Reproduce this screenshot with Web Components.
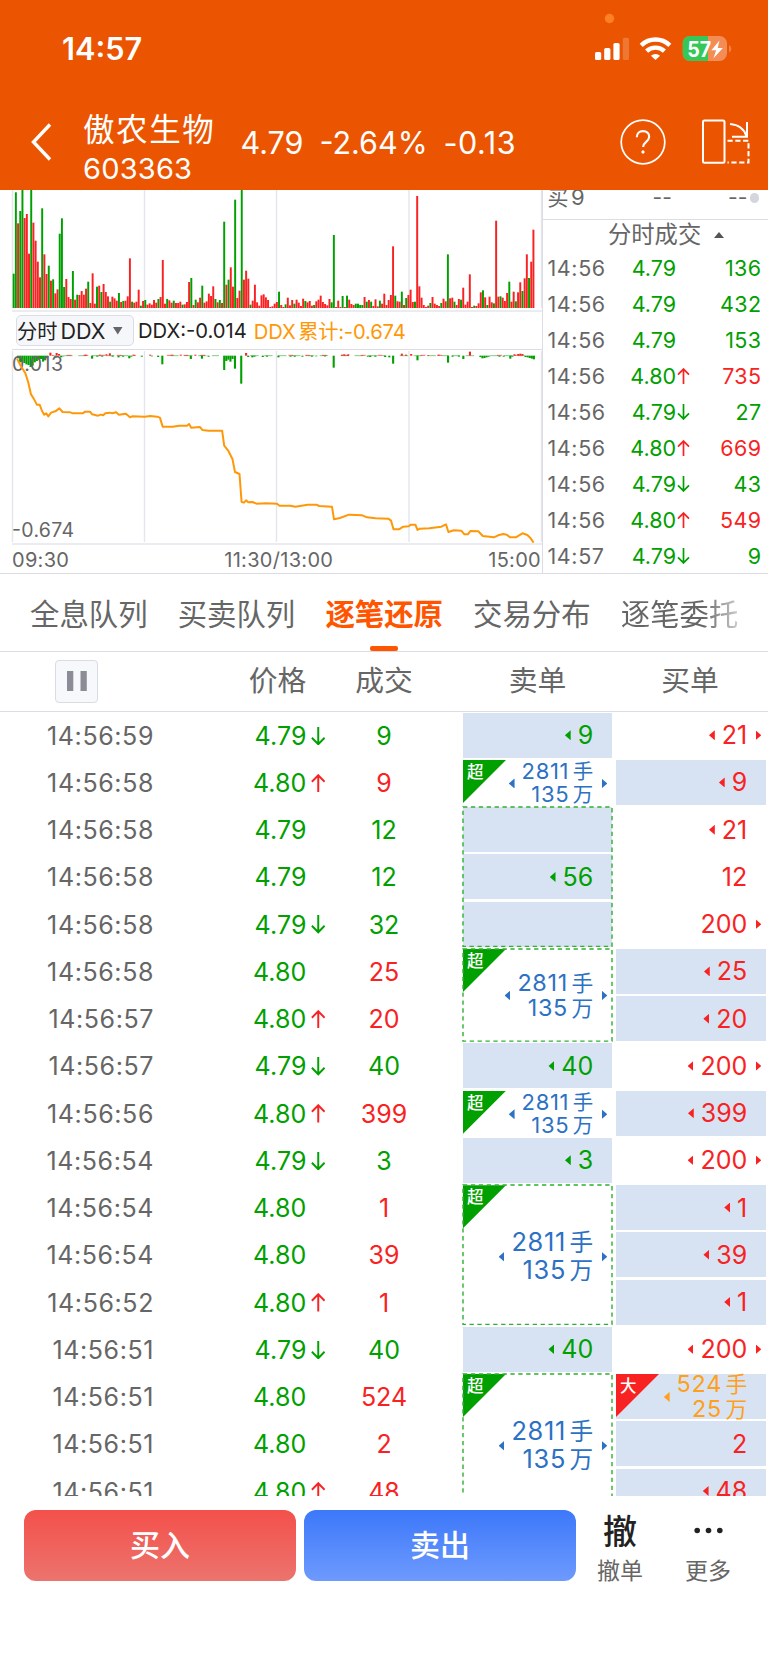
<!DOCTYPE html>
<html lang="zh-CN">
<head>
<meta charset="utf-8">
<title>傲农生物 603363</title>
<style>
body{
    margin: 0;
    background: #fff;
    font-family: Inter, "Noto Sans CJK SC", sans-serif;
    --red: #f92222;
    --green: #00a000;
    --grey: #666;
    --line: #dcdce4;
    color: var(--grey);
    text-autospace: no-autospace;
}
</style>
</head>
<body>
<stock-app></stock-app>

<script>
class BaseElement extends HTMLElement{
    constructor(){
        super();
        this.attachShadow({mode:'open'});
    }

    connectedCallback(){
        this.render()
    }

    render(){
        this.shadowRoot.innerHTML = this.getTemplate() + this.getStyle()
    }
}

class StatusBar extends BaseElement{
    getTemplate(){
        return `
        <time>14:57</time>
        <svg width="140" height="60" viewBox="592 10 140 60" fill="#fff">
            <circle cx="609.5" cy="18.5" r="4.7" fill="#fd8024"/>
            <rect x="595" y="52" width="6.2" height="8" rx="1.6"/>
            <rect x="604.2" y="48" width="6.2" height="12" rx="1.6"/>
            <rect x="613.4" y="43" width="6.2" height="17" rx="1.6"/>
            <rect x="622.8" y="37.7" width="6.2" height="22.3" rx="1.6" opacity=".2"/>
            <g fill="none" stroke="#fff" stroke-width="4.4">
                <path d="M641.2 45.3a20.5 20.5 0 0 1 28.6 0"/>
                <path d="M646.6 51.2a12.8 12.8 0 0 1 17.8 0"/>
            </g>
            <path d="M655.5 60l-4.6-4.3a6.8 6.8 0 0 1 9.2 0z"/>
            <clipPath id="b"><rect x="682.5" y="36" width="44.5" height="25" rx="7.5"/></clipPath>
            <g clip-path="url(#b)">
                <rect x="682.5" y="36" width="45" height="25" fill="#f48c55"/>
                <rect x="682.5" y="36" width="25.5" height="25" fill="#34c759"/>
            </g>
            <path d="M729 45v7.6a4.3 4.3 0 0 0 0-7.6z" fill="#f2834a"/>
            <text x="687.3" y="56.5" font-size="21" font-weight="700" textLength="24" lengthAdjust="spacingAndGlyphs">57</text>
            <path d="M719.5 40.5l-8.2 9.8h4.8l-2.6 8 9.4-10.2h-5.2z"/>
        </svg>
        `
    }

    getStyle(){
        return `
        <style>
        :host{
            display: flex;
            justify-content: space-between;
            align-items: flex-start;
            height: 95px;
            padding: 0 36px 0 62px;
            color: #fff;
        }

        time{
            font-size: 30.7px;
            font-weight: 600;
            line-height: 98px;
        }

        svg{
            margin-top: 10px;
        }
        </style>
        `
    }
}

class StockHeader extends BaseElement{
    getTemplate(){
        return `
        <svg class="back" width="22" height="40" viewBox="0 0 22 40"><path d="M20 2.5 3.5 20 20 37.5"/></svg>
        <div class="name">
            <b>傲农生物</b>
            <span>603363</span>
        </div>
        <div class="quote"><span>4.79</span><span>-2.64%</span><span>-0.13</span></div>
        <svg class="help" width="46" height="46" viewBox="0 0 46 46">
            <circle cx="23" cy="23" r="21.8"/>
            <path d="M16.8 18.2c0-4 2.6-6.1 6.2-6.1s6.2 2.2 6.2 5.7c0 5-6.1 5.2-6.1 10.2" stroke-width="2.1"/>
            <circle cx="23" cy="33" r="1.2" fill="#fff" stroke-width="1"/>
        </svg>
        <svg width="50" height="46" viewBox="0 0 50 46">
            <rect x="2" y="1.5" width="21.5" height="42.3" rx="1.5" stroke-width="2"/>
            <path d="M26.5 21.8h21V43.5h-21" stroke-dasharray="5.2 2.6" stroke-width="2"/>
            <path d="M29 5c8 .6 14.5 5 16.5 12.5M46 3v14.8H31" stroke-width="2"/>
        </svg>
        `
    }

    getStyle(){
        return `
        <style>
        :host{
            display: flex;
            align-items: center;
            height: 95px;
            padding: 0 17px 0 30px;
            box-sizing: border-box;
            color: #fff;
        }

        svg{
            fill: none;
            stroke: #fff;
            stroke-width: 1.7;
            flex: none;
            margin-bottom: 2px;
        }

        .back{
            stroke-width: 3.4;
        }

        .name{
            width: 158px;
            margin-left: 31px;
            padding-top: 12px;
        }

        .name b{
            display: block;
            font-size: 31.5px;
            font-weight: 400;
            letter-spacing: 1.6px;
            line-height: 40px;
            white-space: nowrap;
        }

        .name span{
            display: block;
            font-size: 29px;
            letter-spacing: .2px;
            line-height: 37px;
        }

        .quote{
            display: flex;
            gap: 16px;
            font-size: 30.5px;
            white-space: nowrap;
            flex: 1;
            margin: 0 0 1px -.5px;
        }

        .quote span:last-child{
            letter-spacing: .5px;
        }

        .help{
            margin-right: 35px;
        }
        </style>
        `
    }
}

// one value per minute, negative = sell bar (green)
const VOLUME = [
    -103,-347,254,-291,-354,270,282,163,-354,256,202,139,92,-299,161,102,-127,82,-86,44,
    56,-223,-269,-63,87,33,27,-111,25,-40,39,51,40,58,-79,15,104,13,-64,67,
    -48,72,48,35,-19,34,29,22,-45,18,-21,22,35,149,-19,16,19,55,-7,21,
    -24,10,14,10,24,16,-27,33,144,13,-27,23,16,-22,15,15,19,-10,11,18,
    78,-90,9,-25,17,31,-67,16,20,43,36,65,-27,17,-24,15,-259,70,-85,122,
    64,-325,30,52,-354,85,112,88,-10,22,70,17,7,38,41,32,24,3,5,13,
    18,-49,9,3,-11,31,8,24,-13,25,16,6,28,-21,17,21,7,-9,20,25,
    37,18,12,8,27,-17,-219,3,22,3,-36,3,-37,25,12,9,-13,-13,-9,-9,
    33,-19,24,-19,6,26,5,-22,13,43,9,24,39,185,-37,20,19,-49,9,-30,
    39,55,18,-19,336,65,31,9,3,7,-15,33,13,9,6,-15,28,20,-161,29,
    31,-19,9,27,-25,61,10,19,101,3,-7,6,14,47,-53,32,-9,34,17,-14,
    262,34,-35,31,21,45,-79,19,49,-20,47,77,-51,89,161,-90,139,235
]

class VolumeChart extends BaseElement{
    getTemplate(){
        const bars = VOLUME.map((v, i) => {
            const h = Math.abs(v) / 3
            const x = 12.7 + i * 2.193
            return `<rect x="${x.toFixed(2)}" y="${(118 - h).toFixed(2)}" width="1.95" height="${h.toFixed(2)}" fill="var(${v < 0 ? '--green' : '--red'})"/>`
        }).join('')
        return `
        <svg width="542" height="122" viewBox="0 0 542 122">
            <path d="M12.5 0V118M144.5 0V118M276.5 0V118M409 0V118M541.5 0V118M12 121H542" stroke="#e4e6ee" stroke-width="1.4"/>
            ${bars}
        </svg>
        `
    }

    getStyle(){
        return `
        <style>
        :host, svg{
            display: block;
        }
        </style>
        `
    }
}

class DdxChart extends BaseElement{
    getTemplate(){
        // [x, height], positive goes down
        const bars = [
            [52,8],[58,20],[64,18],[70,22],[76,26],[82,28],[88,34],[94,30],[100,20],[106,16],[112,12],[118,10],[124,18],[130,14],
            [136,6],[145,-9],[152,-2],[158,3],[163,-8],[170,-5],[176,5],[182,2],[246,-3],[265,9],[280,3],[287,-3],[294,3],[306,-4],[316,-7],[324,3],[341,5],[354,3],[372,8],[378,3],
            [384,-3],[408,3],[432,-3],[437,2],[455,4],[467,26],[496,-3],[520,-3],[549,10],[562,-3],[581,9],[600,3],
            [645,43],[651,16],[657,12],[663,18],[669,10],[676,39],[694,84],[708,-8],[714,4],[726,5],[732,3],[756,4],[768,3],
            [801,5],[836,3],[848,3],[870,3],[897,3],[910,2],[935,2],[960,36],[984,-3],[990,-4],[1002,-4],
            [1058,3],[1065,4],[1080,3],[1108,4],[1120,5],[1131,24],[1156,-6],[1168,-3],[1183,-5],[1201,14],
            [1232,-2],[1262,-3],[1289,21],[1302,3],[1320,3],[1333,10],[1352,-12],[1382,4],[1388,8],[1394,7],[1400,5],[1406,3],
            [1437,3],[1449,3],[1468,9],[1474,3],[1480,-4],[1491,-5],[1497,-6],[1503,-5],[1512,4],[1518,5],[1524,7],[1530,9],[1536,11]
        ].map(([x, h]) => `<rect x="${x - 3}" y="${h > 0 ? 17 : 17 + h}" width="6" height="${Math.abs(h)}" fill="var(${h > 0 ? '--green' : '--red'})"/>`).join('')
        return `
        <svg width="542" height="195" viewBox="0 0 542 195">
            <path d="M12.5 1V192M144.5 1V192M276.5 1V192M409 1V192M541.5 1V192M12 194H542" stroke="#e4e6ee" stroke-width="1.4"/>
            <g transform="scale(.3476 .3333)">
                <path d="M185 17H390M490 17H630M720 17H950M980 17H1110M1150 17H1290M1300 17H1380M1410 17H1510" stroke="#4bb54b" stroke-width="2" stroke-dasharray="24 16"/>
                <path d="M192 16H390M480 16H620M830 16H950M990 16H1110M1210 16H1290M1430 16H1510" stroke="var(--red)" stroke-width="2" stroke-dasharray="14 34"/>
                ${bars}
            </g>
            <g font-size="19.5" fill="var(--grey)">
                <text x="12" y="20.5" textLength="51">0.013</text>
                <text x="12" y="186.500" textLength="62">-0.674</text>
            </g>
            <g transform="scale(.3476 .3333)">
                <path class="sum" d="M49 26L60 48 73 70 81 96 89 133 97 146 106 164 114 164 121 183 127 194 133 190 139 199 147 188 159 184 171 175 180 186 202 187 210 190 238 190 245 185 259 185 265 193 282 197 290 194 297 196 303 190 316 188 323 190 334 187 342 194 362 191 374 202 380 199 416 200 432 198 452 200 460 203 468 230 497 230 516 227 538 227 544 222 550 233 575 231 582 240 600 242 639 242 645 287 657 303 669 328 676 366 689 372 695 456 702 458 708 451 714 457 726 456 738 461 765 460 797 461 804 467 835 467 850 470 885 464 910 464 918 468 955 470 961 508 978 504 1004 494 1042 496 1056 502 1080 505 1117 506 1125 512 1132 538 1148 538 1160 530 1176 529 1182 524 1195 524 1201 540 1208 536 1235 535 1270 530 1283 523 1290 546 1306 541 1327 542 1336 553 1346 553 1353 543 1376 544 1389 558 1421 562 1433 556 1448 552 1458 554 1467 562 1484 562 1503 550 1517 555 1526 564 1535 578"/>
            </g>
        </svg>
        <div class="axis"><span>09:30</span><span>11:30/13:00</span><span>15:00</span></div>
        `
    }

    getStyle(){
        return `
        <style>
        :host, svg{
            display: block;
        }

        .sum{
            fill: none;
            stroke: #ff9808;
            stroke-width: 2;
            stroke-linejoin: round;
            vector-effect: non-scaling-stroke;
        }

        .axis{
            display: flex;
            justify-content: space-between;
            padding: 0 1px 0 12px;
            font-size: 20px;
            letter-spacing: .3px;
            line-height: 30px;
        }
        </style>
        `
    }
}

class ChartPanel extends BaseElement{
    getTemplate(){
        return `
        <volume-chart></volume-chart>
        <div class="legend">
            <span class="select">分时<i>DDX</i><svg width="10" height="8"><path d="M0 0h9.5L4.75 7.5z" fill="#666"/></svg></span>
            <span>DDX:-0.014</span>
            <span class="total">DDX<i>累计</i>:-0.674</span>
        </div>
        <ddx-chart></ddx-chart>
        `
    }

    getStyle(){
        return `
        <style>
        :host{
            display: block;
            width: 542px;
            overflow: hidden;
        }

        .legend{
            display: flex;
            align-items: center;
            height: 37px;
            margin-left: 12px;
            padding-left: 4px;
            border-bottom: 1.5px solid var(--line);
            font-size: 20.2px;
            color: #222;
            white-space: nowrap;
        }

        .select{
            display: flex;
            align-items: center;
            box-sizing: border-box;
            width: 118px;
            height: 31px;
            border: 1px solid #dcdee6;
            border-radius: 5px;
            background: #f6f7fa;
            margin-right: 4px;
        }

        .legend i{
            font-style: normal;
        }

        .select i{
            font-size: 21.5px;
            margin-left: 3px;
        }

        .select svg{
            margin-left: 8px;
        }

        .total{
            color: #ff9808;
            margin-left: 7px;
            letter-spacing: -.15px;
        }

        .total i{
            margin-left: 2.5px;
        }
        </style>
        `
    }
}

class PriceArrow extends BaseElement{
    getTemplate(){
        const up = this.getAttribute('dir') === 'up'
        return `
        <svg viewBox="0 0 14 18" style="color: var(${up ? '--red' : '--green'})">
            <path d="${up ? 'M7 18V1M.8 7.5 7 1.2l6.2 6.3' : 'M7 0v17M.8 10.5 7 16.8l6.2-6.3'}" fill="none" stroke="currentColor" stroke-width="1.9"/>
        </svg>
        `
    }

    getStyle(){
        return `
        <style>
        :host{
            display: inline-block;
            width: 14px;
            height: 18px;
        }

        svg{
            display: block;
            width: 100%;
            height: 100%;
        }
        </style>
        `
    }
}

class TickList extends BaseElement{
    getTemplate(){
        const ticks = [
            ['14:56','4.79','','136','g'],
            ['14:56','4.79','','432','g'],
            ['14:56','4.79','','153','g'],
            ['14:56','4.80','up','735','r'],
            ['14:56','4.79','down','27','g'],
            ['14:56','4.80','up','669','r'],
            ['14:56','4.79','down','43','g'],
            ['14:56','4.80','up','549','r'],
            ['14:57','4.79','down','9','g']
        ]
        return `
        <div class="level"><span>买<i>9</i></span><span>--</span><span>--</span><em></em></div>
        <div class="title">分时成交<svg width="10" height="6"><path d="M0 6 5 0l5 6z" fill="#555"/></svg></div>
        ${ticks.map(([time, price, dir, qty, c]) => `
        <div class="row">
            <span class="time">${time}</span>
            <span class="g price">${price}</span>
            <span class="dir">${dir ? `<price-arrow dir="${dir}"></price-arrow>` : ''}</span>
            <span class="${c} qty">${qty}</span>
        </div>`).join('')}
        `
    }

    getStyle(){
        return `
        <style>
        :host{
            display: block;
            box-sizing: border-box;
            width: 226px;
            border-left: 1.5px solid var(--line);
            overflow: hidden;
        }

        .level{
            display: grid;
            grid-template-columns: 105px 75.5px 21.5px 10px;
            align-items: center;
            height: 30px;
            box-sizing: border-box;
            padding: 0 0 15px 4.5px;
            border-bottom: 1.5px solid var(--line);
            font-size: 21px;
            line-height: 14px;
        }

        .level i{
            font-style: normal;
            margin-left: 2.5px;
            font-size: 22px;
        }

        .level em{
            width: 9.5px;
            height: 9.5px;
            border-radius: 50%;
            background: #d4d6de;
        }

        .title{
            display: flex;
            align-items: center;
            gap: 13px;
            height: 30px;
            padding-left: 65px;
            font-size: 23.3px;
            line-height: 30px;
        }

        .row{
            display: grid;
            grid-template-columns: 60px 68.5px 16px 1fr;
            align-items: center;
            height: 36px;
            padding: 0 6.5px 0 4.5px;
            font-size: 21.5px;
        }

        .time{
            letter-spacing: .6px;
        }

        .price, .qty{
            text-align: right;
        }

        .qty{
            letter-spacing: .4px;
        }

        .dir{
            display: flex;
            padding-left: 1px;
        }

        .r{ color: var(--red); }
        .g{ color: var(--green); }
        price-arrow{ width: 13px; height: 16px; }
        </style>
        `
    }
}

class TradeTabs extends BaseElement{
    getTemplate(){
        return `
        <a>全息队列</a>
        <a>买卖队列</a>
        <a class="active">逐笔还原</a>
        <a>交易分布</a>
        <a class="fade">逐笔委托</a>
        `
    }

    getStyle(){
        return `
        <style>
        :host{
            display: flex;
            gap: 30.1px;
            height: 79px;
            box-sizing: border-box;
            padding-left: 30px;
            border-top: 1.5px solid var(--line);
            border-bottom: 1.5px solid var(--line);
            overflow: hidden;
        }

        a{
            display: flex;
            flex-direction: column;
            align-items: center;
            flex: none;
            width: 117.6px;
            font-size: 29.4px;
            line-height: 82px;
            height: 77px;
        }

        .active{
            color: #ff5500;
            font-weight: 700;
        }

        .active::after{
            content: '';
            width: 28px;
            height: 4.5px;
            border-radius: 2px;
            background: #ff5500;
            margin-top: -9.5px;
            flex: none;
        }

        .fade{
            background: linear-gradient(90deg, #666 70%, #ccc 100%);
            background-clip: text;
            color: transparent;
        }
        </style>
        `
    }
}

class OrderCell extends BaseElement{
    getTemplate(){
        const a = this.getAttribute('arrows') || ''
        const tag = this.getAttribute('tag')
        return `
        ${tag ? `<span class="tag"><b>${tag}</b></span>` : ''}
        ${this.hasAttribute('dashed') ? '<svg class="frame"><rect width="100%" height="100%"/></svg>' : ''}
        ${a.includes('l') ? '<i class="left"></i>' : ''}
        <span class="text"><slot></slot></span>
        <span class="end">${a.includes('r') ? '<i class="right"></i>' : ''}</span>
        `
    }

    getStyle(){
        return `
        <style>
        :host{
            position: relative;
            display: flex;
            align-items: center;
            justify-content: flex-end;
            font-size: 25px;
            margin-bottom: 2.3px;
        }

        :host([fill]){
            background: #d7e3f2;
        }

        :host([color=green]){ color: var(--green); }
        :host([color=red]){ color: var(--red); }
        :host([color=blue]){ color: #2c71c4; }
        :host([color=orange]){ color: #ff9f1a; }

        .frame{
            position: absolute;
            left: 0;
            top: 0;
            width: 100%;
            height: 100%;
            overflow: visible;
            fill: none;
            stroke: #30b030;
            stroke-width: 1.4;
            stroke-dasharray: 4.3 3.6;
        }

        .text{
            text-align: right;
        }

        .end{
            width: 18.8px;
            display: flex;
            justify-content: flex-end;
        }

        .left, .right{
            width: 5.8px;
            height: 10px;
            background: currentColor;
        }

        .left{
            clip-path: polygon(100% 0, 100% 100%, 0 50%);
            margin-right: 7px;
        }

        .right{
            clip-path: polygon(0 0, 100% 50%, 0 100%);
            margin-right: 4.7px;
        }

        .tag{
            position: absolute;
            left: 0;
            top: 0;
            width: 43px;
            height: 43px;
            background: var(--tag, var(--green));
            clip-path: polygon(0 0, 100% 0, 0 100%);
            color: #fff;
            font-size: 16.5px;
            line-height: 24px;
            padding-left: 4px;
            box-sizing: border-box;
        }

        .tag b{
            font-weight: 500;
        }
        </style>
        `
    }
}

class TradeTable extends BaseElement{
    getTemplate(){
        const rows = [
            ['14:56:59','4.79','down','9','g'],
            ['14:56:58','4.80','up','9','r'],
            ['14:56:58','4.79','','12','g'],
            ['14:56:58','4.79','','12','g'],
            ['14:56:58','4.79','down','32','g'],
            ['14:56:58','4.80','','25','r'],
            ['14:56:57','4.80','up','20','r'],
            ['14:56:57','4.79','down','40','g'],
            ['14:56:56','4.80','up','399','r'],
            ['14:56:54','4.79','down','3','g'],
            ['14:56:54','4.80','','1','r'],
            ['14:56:54','4.80','','39','r'],
            ['14:56:52','4.80','up','1','r'],
            ['14:56:51','4.79','down','40','g'],
            ['14:56:51','4.80','','524','r'],
            ['14:56:51','4.80','','2','r'],
            ['14:56:51','4.80','up','48','r']
        ]
        // [row, rows spanned, text, arrows]
        const sells = [
            [0,1,'9','l'],[1,1],[2,1,''],[3,1,'56','l'],[4,1,''],[5,2],[7,1,'40','l'],[8,1],[9,1,'3','l'],[10,3],[13,1,'40','l'],[14,3]
        ]
        const buys = [
            ['21','lr'],['9','l',1],['21','l'],['12',''],['200','r'],['25','l',1],['20','l',1],['200','lr'],['399','l',1],
            ['200','lr'],['1','l',1],['39','l',1],['1','l',1],['200','lr'],null,['2','',1],['48','l',1]
        ]
        return `
        <header>
            <span class="pause"><svg width="20" height="20"><path d="M0 0h6.3v20H0zM13.5 0h6.3v20h-6.3z" fill="#8c8c96"/></svg></span>
            <span>价格</span><span>成交</span><span>卖单</span><span>买单</span>
        </header>
        <section>
            ${rows.map(([time, price, dir, qty, c], i) => `
            <span class="time" style="grid-row:${i + 1}">${time}</span>
            <span class="price" style="grid-row:${i + 1}">${price}${dir ? `<price-arrow dir="${dir}"></price-arrow>` : '<s></s>'}</span>
            <span class="qty ${c}" style="grid-row:${i + 1}">${qty}</span>`).join('')}
            ${sells.map(([row, span, text, arrows]) => text === undefined
                ? `<order-cell class="sell big s${span}" color="blue" tag="超" arrows="lr" ${span > 1 ? 'dashed' : ''} style="grid-row:${row + 1}/span ${span}">2811<i>手</i><br>135<i>万</i></order-cell>`
                : `<order-cell class="sell" color="green" fill arrows="${arrows || ''}" style="grid-row:${row + 1}">${text}</order-cell>`).join('')}
            <order-cell class="sell" dashed style="grid-row:3/span 3"></order-cell>
            ${buys.map((b, i) => b
                ? `<order-cell class="buy" color="red" arrows="${b[1]}" ${b[2] ? 'fill' : ''} style="grid-row:${i + 1}">${b[0]}</order-cell>`
                : `<order-cell class="buy big s2" color="orange" fill tag="大" arrows="l" style="--tag:var(--red);grid-row:${i + 1}">524<i>手</i><br>25<i>万</i></order-cell>`).join('')}
        </section>
        `
    }

    getStyle(){
        return `
        <style>
        :host{
            display: block;
        }

        header{
            display: grid;
            grid-template-columns: 224px 107px 106px 201px 104px;
            align-items: center;
            height: 60px;
            box-sizing: border-box;
            border-bottom: 1.5px solid var(--line);
            font-size: 28.8px;
            line-height: 56px;
            text-align: center;
        }

        .pause{
            display: flex;
            align-items: center;
            justify-content: center;
            box-sizing: border-box;
            width: 43px;
            height: 43px;
            margin-left: 55px;
            border: 1.5px solid #d9dce2;
            border-radius: 4px;
            background: #f6f8fb;
        }

        section{
            display: grid;
            grid-template-columns: 154px 171px 118px 20px 149px 4px 150px 2px;
            grid-auto-rows: 47.24px;
            height: 784px;
            padding-top: .8px;
            box-sizing: border-box;
            overflow: hidden;
            font-size: 25px;
            line-height: 46px;
        }

        .time{
            grid-column: 1;
            text-align: right;
            letter-spacing: .6px;
        }

        .price{
            grid-column: 2;
            display: flex;
            align-items: center;
            justify-content: flex-end;
            height: 46px;
            color: var(--green);
            letter-spacing: .1px;
        }

        .price price-arrow, .price s{
            width: 14.5px;
            height: 18.5px;
            margin-left: 4px;
        }

        .qty{
            grid-column: 3;
            text-align: center;
        }

        .sell{ grid-column: 5; }
        .buy{ grid-column: 7; }
        .r{ color: var(--red); }
        .g{ color: var(--green); }

        .big{
            font-size: 22px;
            line-height: 22.2px;
            letter-spacing: .7px;
            padding-top: 2px;
        }

        .big i{
            font-style: normal;
            font-size: .93em;
            letter-spacing: 0;
            margin-left: 3.5px;
        }

        .s2{
            font-size: 23.4px;
            line-height: 23.7px;
            padding-top: 1px;
        }

        .s3{
            font-size: 25.4px;
            line-height: 26.5px;
            padding-top: 4px;
        }
        </style>
        `
    }
}

class TradeBar extends BaseElement{
    getTemplate(){
        return `
        <button class="buy">买入</button>
        <button class="sell">卖出</button>
        <div><b>撤</b><span>撤单</span></div>
        <div>
            <svg width="29" height="43" viewBox="0 0 29 43" fill="#222"><circle cx="3.2" cy="20.5" r="2.8"/><circle cx="14.5" cy="20.5" r="2.8"/><circle cx="25.8" cy="20.5" r="2.8"/></svg>
            <span>更多</span>
        </div>
        `
    }

    getStyle(){
        return `
        <style>
        :host{
            display: grid;
            grid-template-columns: 272px 272px 80px 80px;
            grid-template-rows: 71px;
            column-gap: 8px;
            padding: 14px 0 82px 24px;
        }

        button{
            border: 0;
            border-radius: 12px;
            color: #fff;
            font: 500 30px/71px Inter, "Noto Sans CJK SC", sans-serif;
            padding: 0;
        }

        .buy{ background: linear-gradient(#f4504b, #ec746e); }
        .sell{ background: linear-gradient(#3c78f9, #6e9afe); }

        div{
            display: flex;
            flex-direction: column;
            align-items: center;
            width: 72px;
        }

        svg{
            flex: none;
        }

        div b{
            color: #222;
            font-size: 34px;
            font-weight: 500;
            line-height: 43px;
        }

        div span{
            font-size: 23px;
            line-height: 36px;
        }
        </style>
        `
    }
}

class StockApp extends BaseElement{
    getTemplate(){
        return `
        <div class="top">
            <status-bar></status-bar>
            <stock-header></stock-header>
        </div>
        <div class="market">
            <chart-panel></chart-panel>
            <tick-list></tick-list>
        </div>
        <trade-tabs></trade-tabs>
        <trade-table></trade-table>
        <trade-bar></trade-bar>
        `
    }

    getStyle(){
        return `
        <style>
        :host{
            display: block;
            width: 768px;
            height: 1663px;
            overflow: hidden;
        }

        .top{
            height: 190.4px;
            background: #eb5502;
        }

        .market{
            display: flex;
            height: 382.6px;
            overflow: hidden;
        }
        </style>
        `
    }
}

customElements.define('status-bar', StatusBar);
customElements.define('stock-header', StockHeader);
customElements.define('volume-chart', VolumeChart);
customElements.define('ddx-chart', DdxChart);
customElements.define('chart-panel', ChartPanel);
customElements.define('price-arrow', PriceArrow);
customElements.define('tick-list', TickList);
customElements.define('trade-tabs', TradeTabs);
customElements.define('order-cell', OrderCell);
customElements.define('trade-table', TradeTable);
customElements.define('trade-bar', TradeBar);
customElements.define('stock-app', StockApp);
</script>
</body>
</html>
